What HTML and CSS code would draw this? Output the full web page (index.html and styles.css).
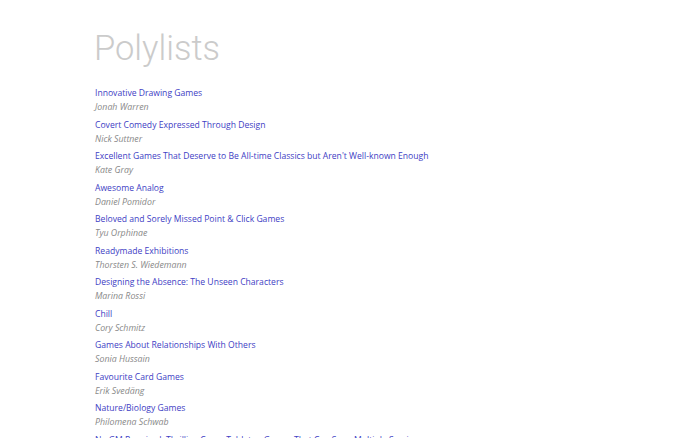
FILE: index.html
```html
<!DOCTYPE html>
<html lang="en">
<head>
  <meta charset="UTF-8">
  <title>Polylists</title>
  <link rel="stylesheet" href="styles.css">
</head>
<body>
  <div class="page">
    <h1 class="site-title">Polylists</h1>
    <ul class="lists">
      <li class="list-item">
        <a class="list-title" href="#">Innovative Drawing Games</a>
        <span class="list-author">Jonah Warren</span>
      </li>
      <li class="list-item">
        <a class="list-title" href="#">Covert Comedy Expressed Through Design</a>
        <span class="list-author">Nick Suttner</span>
      </li>
      <li class="list-item">
        <a class="list-title" href="#">Excellent Games That Deserve to Be All-time Classics but Aren't Well-known Enough</a>
        <span class="list-author">Kate Gray</span>
      </li>
      <li class="list-item">
        <a class="list-title" href="#">Awesome Analog</a>
        <span class="list-author">Daniel Pomidor</span>
      </li>
      <li class="list-item">
        <a class="list-title" href="#">Beloved and Sorely Missed Point &amp; Click Games</a>
        <span class="list-author">Tyu Orphinae</span>
      </li>
      <li class="list-item">
        <a class="list-title" href="#">Readymade Exhibitions</a>
        <span class="list-author">Thorsten S. Wiedemann</span>
      </li>
      <li class="list-item">
        <a class="list-title" href="#">Designing the Absence: The Unseen Characters</a>
        <span class="list-author">Marina Rossi</span>
      </li>
      <li class="list-item">
        <a class="list-title" href="#">Chill</a>
        <span class="list-author">Cory Schmitz</span>
      </li>
      <li class="list-item">
        <a class="list-title" href="#">Games About Relationships With Others</a>
        <span class="list-author">Sonia Hussain</span>
      </li>
      <li class="list-item">
        <a class="list-title" href="#">Favourite Card Games</a>
        <span class="list-author">Erik Svedäng</span>
      </li>
      <li class="list-item">
        <a class="list-title" href="#">Nature/Biology Games</a>
        <span class="list-author">Philomena Schwab</span>
      </li>
      <li class="list-item">
        <a class="list-title" href="#">No GM Required: Thrilling Co-op Tabletop Games That Can Span Multiple Sessions</a>
        <span class="list-author">Yoshi</span>
      </li>
    </ul>
  </div>
</body>
</html>
```

FILE: styles.css
```css
body {
  margin: 0;
  background: #fff;
  font-family: "Open Sans", Arial, sans-serif;
}
.page {
  padding: 26px 0 0 95px;
}
.site-title {
  margin: 0 0 17px -1px;
  font-family: Roboto, Arial, sans-serif;
  font-weight: 300;
  font-size: 34.5px;
  line-height: 44px;
  color: #cbcbcb;
}
.lists {
  list-style: none;
  margin: 0;
  padding: 0;
}
.list-item {
  display: flex;
  flex-direction: column;
  align-items: flex-start;
  height: 31.5px;
}
.list-title {
  font-size: 8.6px;
  line-height: 13px;
  color: #4040c4;
  text-decoration: none;
}
.list-author {
  font-size: 8.8px;
  line-height: 15px;
  font-style: italic;
  color: #888;
}
```
